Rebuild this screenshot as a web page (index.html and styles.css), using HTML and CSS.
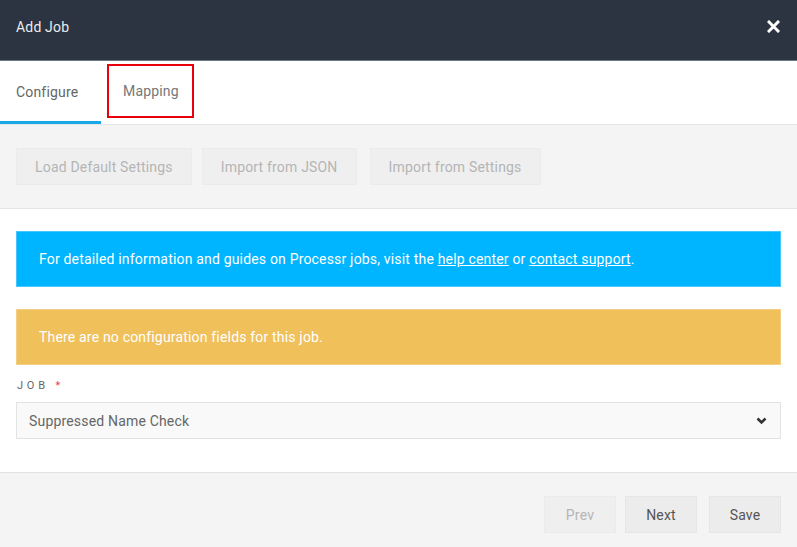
FILE: index.html
```html
<!DOCTYPE html>
<html>
<head>
<meta charset="utf-8">
<link rel="stylesheet" href="styles.css">
</head>
<body>
<div class="modal">
  <header class="modal-header">
    <span class="modal-title">Add Job</span>
    <svg class="close" width="13" height="13" viewBox="0 0 13 13"><path d="M2 2 L11 11 M11 2 L2 11" stroke="#fff" stroke-width="3" stroke-linecap="square"/></svg>
  </header>
  <nav class="tabs">
    <div class="tab tab-active">Configure</div>
    <div class="tab tab-marked">Mapping</div>
  </nav>
  <div class="toolbar">
    <button class="btn btn-disabled">Load Default Settings</button>
    <button class="btn btn-disabled">Import from JSON</button>
    <button class="btn btn-disabled btn-gap">Import from Settings</button>
  </div>
  <div class="content">
    <div class="alert alert-info"><p class="alert-text">For detailed information and guides on Processr jobs, visit the <a href="#">help center</a> or <a href="#">contact support</a>.</p></div>
    <div class="alert alert-warning"><p class="alert-text">There are no configuration fields for this job.</p></div>
    <label class="field-label">JOB <span class="req">*</span></label>
    <div class="select">
      <span>Suppressed Name Check</span>
      <svg width="11" height="8" viewBox="0 0 11 8"><path d="M1.5 1.5 L5.5 5.5 L9.5 1.5" stroke="#333" stroke-width="2.6" fill="none"/></svg>
    </div>
  </div>
  <footer class="footer">
    <button class="btn btn-small btn-disabled">Prev</button>
    <button class="btn btn-small">Next</button>
    <button class="btn btn-small btn-save">Save</button>
  </footer>
</div>
</body>
</html>
```
FILE: styles.css
```css
html, body {
  margin: 0;
  padding: 0;
  background: #fff;
}
body {
  font-family: Roboto, "Liberation Sans", sans-serif;
  font-size: 14px;
  color: #555;
  letter-spacing: 0.18px;
}
.modal {
  width: 797px;
  height: 547px;
  display: flex;
  flex-direction: column;
}
.modal-header {
  height: 61px;
  background: #2c3441;
  border-bottom: 1px solid #6f7782;
  display: flex;
  align-items: center;
  justify-content: space-between;
  padding: 0 17px 7px 16px;
  box-sizing: border-box;
  flex-shrink: 0;
}
.modal-title {
  color: #e9ebee;
  font-size: 14px;
}
.close {
  display: block;
}
.tabs {
  height: 64px;
  display: flex;
  align-items: stretch;
  border-bottom: 1px solid #e6e6e6;
  box-sizing: border-box;
  flex-shrink: 0;
}
.tab {
  display: flex;
  align-items: center;
  font-size: 14px;
  color: #666;
  box-sizing: border-box;
}
.tab-active {
  width: 101px;
  padding: 1px 0 0 16px;
  border-bottom: 3px solid #1aa9e6;
}
.tab-marked {
  width: 87px;
  margin: 3px 0 6px 6px;
  padding: 0 0 0 14px;
  border: 2px solid #e8000b;
  color: #777;
}
.toolbar {
  background: #f4f4f4;
  border-bottom: 1px solid #e4e4e4;
  padding: 23px 16px 23px;
  display: flex;
  gap: 10px;
  flex-shrink: 0;
}
.btn {
  height: 37px;
  padding: 0 18px;
  font-family: Roboto, "Liberation Sans", sans-serif;
  font-size: 14px;
  letter-spacing: 0.18px;
  background: #ececec;
  border: 1px solid #e6e6e6;
  color: #555;
  border-radius: 0;
}
.btn-gap {
  margin-left: 3px;
}
.btn-disabled {
  color: #b5b5b5;
  background: #efefef;
  border-color: #ebebeb;
}
.content {
  padding: 22px 16px 0;
  flex: 1;
}
.alert {
  height: 56px;
  display: flex;
  align-items: center;
  padding: 0 22px;
  color: #fff;
  font-size: 14px;
  box-sizing: border-box;
}
.alert-text {
  margin: 0;
}
.alert a {
  color: #fff;
}
.alert-info {
  background: #00b5ff;
  border: 1px solid #46c7fb;
}
.alert-warning {
  margin-top: 22px;
  background: #f0c05b;
  border: 1px solid #f3cf86;
}
.field-label {
  display: block;
  margin-top: 14px;
  font-size: 11px;
  letter-spacing: 3.8px;
  color: #666;
  line-height: 14px;
  padding-left: 1px;
}
.req {
  color: #e8453c;
}
.select {
  margin-top: 9px;
  height: 37px;
  background: #f9f9f9;
  border: 1px solid #e3e3e3;
  display: flex;
  align-items: center;
  justify-content: space-between;
  padding: 0 13px 0 12px;
  box-sizing: border-box;
  color: #666;
  font-size: 14px;
}
.footer {
  height: 75px;
  background: #f4f4f4;
  border-top: 1px solid #e2e2e2;
  display: flex;
  justify-content: flex-end;
  align-items: flex-start;
  padding: 23px 16px 0;
  box-sizing: border-box;
  gap: 9px;
  flex-shrink: 0;
}
.btn-small {
  width: 72px;
  padding: 0;
}
.btn-save {
  margin-left: 3px;
}
```
